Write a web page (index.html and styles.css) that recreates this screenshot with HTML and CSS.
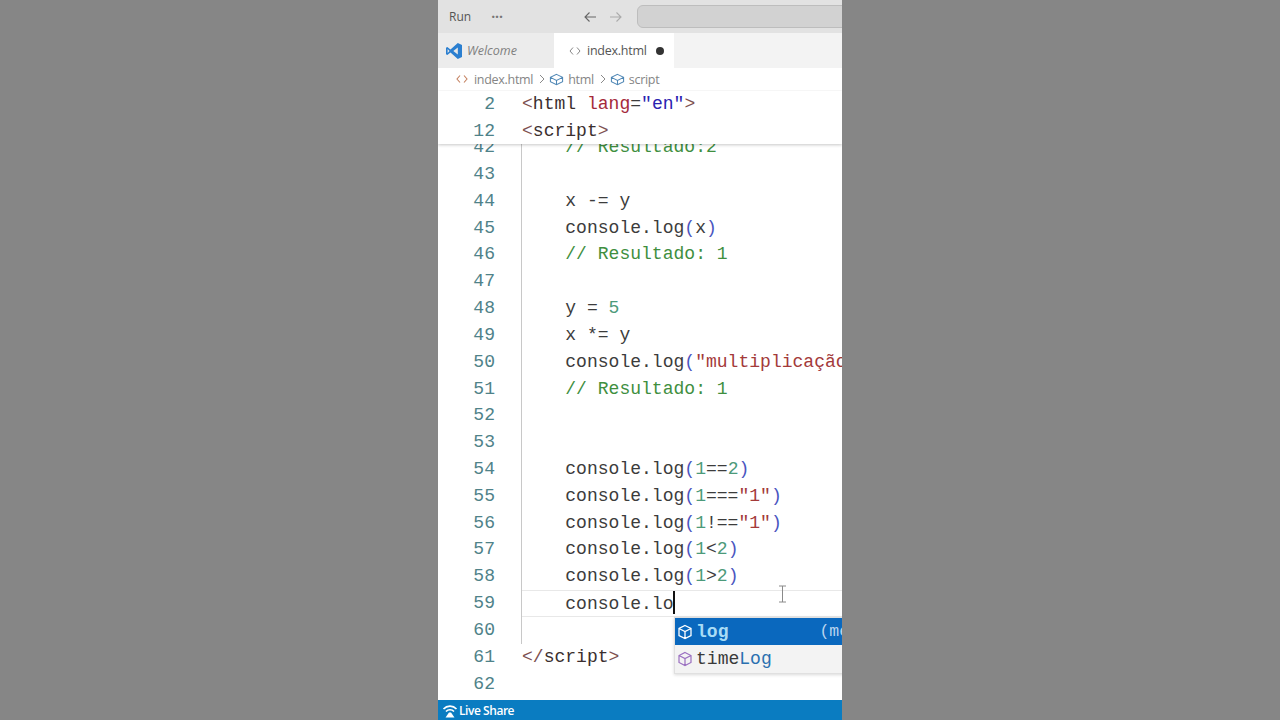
FILE: index.html
```html
<!DOCTYPE html>
<html lang="pt">
<head>
<meta charset="utf-8">
<title>index.html</title>
<link rel="stylesheet" href="styles.css">
</head>
<body>
<main class="phone">
  <header class="titlebar">
    <span class="menu">Run</span>
    <span class="dots">···</span>
    <svg class="nav nav-back" width="16" height="16" viewBox="0 0 16 16"><path d="M14 8H3M7.500 3.500L3 8l4.500 4.500" fill="none" stroke="#666" stroke-width="1.100"/></svg>
    <svg class="nav nav-fwd" width="16" height="16" viewBox="0 0 16 16"><path d="M2 8h11M8.500 3.500L13 8l-4.500 4.500" fill="none" stroke="#aaa" stroke-width="1.100"/></svg>
    <div class="search"></div>
  </header>
  <nav class="tabs">
    <div class="tab tab-welcome">
      <svg class="vscode" width="18" height="18" viewBox="0 0 18 18"><path d="M12.800 1L17 3v12l-4.200 2L5.500 10.400 2.300 13 1 12.300V5.700L2.300 5l3.200 2.600z" fill="#2b7fd0"/><path d="M12.800 5.500L8.300 9l4.500 3.500z" fill="#e8e8e8"/><path d="M2.600 6.900L4.500 9l-1.900 2.100z" fill="#e8e8e8"/></svg>
      <span class="tab-label-italic">Welcome</span>
    </div>
    <div class="tab tab-active">
      <svg class="code-svg" width="12" height="10" viewBox="0 0 12 10"><path d="M4 1.500L1 5l3 3.500M8 1.500L11 5 8 8.500" fill="none" stroke="#888" stroke-width="1"/></svg>
      <span class="tab-label">index.html</span>
      <span class="dirty"></span>
    </div>
  </nav>
  <div class="crumbs">
    <svg class="code-svg crumb-first" width="12" height="10" viewBox="0 0 12 10"><path d="M4 1.500L1 5l3 3.500M8 1.500L11 5 8 8.500" fill="none" stroke="#c4805f" stroke-width="1.100"/></svg><span>index.html</span><svg class="sep" width="8" height="12" viewBox="0 0 8 12"><path d="M2 2l4 4-4 4" fill="none" stroke="#8a8a8a" stroke-width="1"/></svg>
    <svg class="cube" width="15" height="15" viewBox="0 0 16 16"><path d="M8 2.500l6.500 3.200v4.600L8 13.500l-6.500-3.200V5.700zM1.500 5.700L8 9l6.500-3.300M8 9v4.500" fill="none" stroke="#4f87b5" stroke-width="1.100"/></svg><span>html</span><svg class="sep" width="8" height="12" viewBox="0 0 8 12"><path d="M2 2l4 4-4 4" fill="none" stroke="#8a8a8a" stroke-width="1"/></svg>
    <svg class="cube" width="15" height="15" viewBox="0 0 16 16"><path d="M8 2.500l6.500 3.200v4.600L8 13.500l-6.500-3.200V5.700zM1.500 5.700L8 9l6.500-3.300M8 9v4.500" fill="none" stroke="#4f87b5" stroke-width="1.100"/></svg><span>script</span>
  </div>
  <section class="editor">
    <div class="sticky">
      <div class="line"><span class="num">2</span><span class="code"><i class="tag">&lt;</i><i class="ink">html</i> <i class="attr">lang</i>=<i class="kw">"en"</i><i class="tag">&gt;</i></span></div>
      <div class="line"><span class="num">12</span><span class="code"><i class="tag">&lt;</i><i class="ink">script</i><i class="tag">&gt;</i></span></div>
    </div>
    <div class="scroll">
      <div class="line"><span class="num">42</span><span class="code">    <i class="cm">// Resultado:2</i></span></div>
      <div class="line"><span class="num">43</span><span class="code"></span></div>
      <div class="line"><span class="num">44</span><span class="code">    x -= y</span></div>
      <div class="line"><span class="num">45</span><span class="code">    console.log<i class="par">(</i>x<i class="par">)</i></span></div>
      <div class="line"><span class="num">46</span><span class="code">    <i class="cm">// Resultado: 1</i></span></div>
      <div class="line"><span class="num">47</span><span class="code"></span></div>
      <div class="line"><span class="num">48</span><span class="code">    y = <i class="n">5</i></span></div>
      <div class="line"><span class="num">49</span><span class="code">    x *= y</span></div>
      <div class="line"><span class="num">50</span><span class="code">    console.log<i class="par">(</i><i class="str">"multiplicação"</i><i class="par">)</i></span></div>
      <div class="line"><span class="num">51</span><span class="code">    <i class="cm">// Resultado: 1</i></span></div>
      <div class="line"><span class="num">52</span><span class="code"></span></div>
      <div class="line"><span class="num">53</span><span class="code"></span></div>
      <div class="line"><span class="num">54</span><span class="code">    console.log<i class="par">(</i><i class="n">1</i>==<i class="n">2</i><i class="par">)</i></span></div>
      <div class="line"><span class="num">55</span><span class="code">    console.log<i class="par">(</i><i class="n">1</i>===<i class="str">"1"</i><i class="par">)</i></span></div>
      <div class="line"><span class="num">56</span><span class="code">    console.log<i class="par">(</i><i class="n">1</i>!==<i class="str">"1"</i><i class="par">)</i></span></div>
      <div class="line"><span class="num">57</span><span class="code">    console.log<i class="par">(</i><i class="n">1</i>&lt;<i class="n">2</i><i class="par">)</i></span></div>
      <div class="line"><span class="num">58</span><span class="code">    console.log<i class="par">(</i><i class="n">1</i>&gt;<i class="n">2</i><i class="par">)</i></span></div>
      <div class="line line-current"><span class="num">59</span><span class="code">    console.lo<b class="caret"></b></span></div>
      <div class="line"><span class="num">60</span><span class="code"></span></div>
      <div class="line no-guide"><span class="num">61</span><span class="code"><i class="tag">&lt;/</i><i class="ink">script</i><i class="tag">&gt;</i></span></div>
      <div class="line no-guide"><span class="num">62</span><span class="code"></span></div>
      <div class="suggest">
        <div class="sug sug-on">
          <svg width="16" height="16" viewBox="0 0 16 16"><path d="M8 1.500l6 3v7l-6 3-6-3v-7zM2 4.500l6 3 6-3M8 7.500v7" fill="none" stroke="#fff" stroke-width="1.300"/></svg>
          <span class="sug-text"><b class="match">log</b></span>
          <span class="sug-meta">(me</span>
        </div>
        <div class="sug">
          <svg width="16" height="16" viewBox="0 0 16 16"><path d="M8 1.500l6 3v7l-6 3-6-3v-7zM2 4.500l6 3 6-3M8 7.500v7" fill="none" stroke="#9a6fc0" stroke-width="1.200"/></svg>
          <span class="sug-text">time<span class="match2">Log</span></span>
        </div>
      </div>
      <svg class="ibeam" width="9" height="18" viewBox="0 0 9 18"><path d="M1 1h7M4.500 1v16M1 17h7" fill="none" stroke="#8a8a8a" stroke-width="1"/></svg>
    </div>
  </section>
  <footer class="status">
    <svg width="16" height="16" viewBox="0 0 16 16"><path d="M1.500 7a9 9 0 0 1 13 0M4 9.500a5.500 5.500 0 0 1 8 0" fill="none" stroke="#fff" stroke-width="1.700"/><path d="M3.500 15.500l3.500-5h2l3.500 5z" fill="#fff"/></svg>
    <span>Live Share</span>
  </footer>
</main>
</body>
</html>
```
FILE: styles.css
```css
* { box-sizing: border-box; }
html, body { margin: 0; height: 100%; }
body {
  background: #868686;
  display: flex;
  justify-content: center;
  overflow: hidden;
  font-family: "Open Sans", "Noto Sans", sans-serif;
}
i { font-style: normal; }
.phone {
  width: 404px;
  height: 720px;
  background: #fff;
  display: flex;
  flex-direction: column;
  overflow: hidden;
}
.titlebar {
  height: 33px;
  flex: none;
  background: #e2e2e2;
  display: flex;
  align-items: center;
  padding-left: 11px;
  font-size: 12px;
  color: #555;
}
.dots { margin-left: 20px; font-size: 14px; font-weight: 700; color: #777; }
.nav-back { margin-left: 79px; }
.nav-fwd { margin-left: 10px; }
.search {
  margin-left: 13px;
  flex: 1;
  height: 23px;
  margin-right: -8px;
  background: #d2d2d2;
  border: 1px solid #bdbdbd;
  border-radius: 6px;
}
.tabs {
  height: 35px;
  flex: none;
  display: flex;
  background: #f3f3f3;
  font-size: 12.500px;
}
.tab { display: flex; align-items: center; }
.tab-welcome { width: 116px; padding-left: 7px; gap: 4px; background: #ececec; color: #808080; }
.tab-label-italic { font-style: italic; }
.tab-active { width: 120px; background: #fff; padding-left: 15px; color: #555; }
.tab-label { margin-left: 6px; letter-spacing: -.25px; }
.dirty { width: 8px; height: 8px; border-radius: 50%; background: #333; margin-left: 9px; }
.crumbs {
  height: 22px;
  flex: none;
  display: flex;
  align-items: center;
  padding-left: 18px;
  font-size: 12.500px;
  letter-spacing: -.3px;
  color: #858585;
}
.crumb-first { margin-right: 6px; }
.sep { margin: 0 3px 0 5px; }
.cube { margin-right: 4px; }
.editor {
  height: 610px;
  flex: none;
  position: relative;
  overflow: hidden;
  padding-top: .7px;
  font-family: "Liberation Mono", monospace;
  font-size: 18.050px;
  color: #3c3c3c;
}
.sticky {
  position: relative;
  z-index: 2;
  background: #fff;
  margin-bottom: -10.300px;
  box-shadow: 0 1px 3px rgba(0, 0, 0, .22);
}
.scroll { position: relative; }
.line {
  height: 26.830px;
  display: flex;
  line-height: 26.830px;
}
.num { width: 57px; margin-right: 27px; text-align: right; color: #4f8289; flex: none; }
.code { flex: 1; height: 100%; white-space: pre; }
.scroll .line:not(.no-guide) .code { box-shadow: -1px 0 0 #c8c8c8; }
.line-current .code { position: relative; line-height: 23.830px; border-top: 1.500px solid #e8e8e8; border-bottom: 1.500px solid #e8e8e8; }
.caret { display: inline-block; width: 2px; height: 23px; background: #111; vertical-align: -5px; margin-left: -1px; }
.tag { color: #7d5050; }
.ink { color: #3b2f2f; }
.attr { color: #a52a3a; }
.kw { color: #2a22b0; }
.cm { color: #3f8f3f; }
.par { color: #4a55c0; }
.n { color: #4c9a7a; }
.str { color: #a33a3a; }
.suggest {
  position: absolute;
  left: 236px;
  top: 483px;
  width: 180px;
  height: 57px;
  background: #f3f3f3;
  border: 1px solid #e0e0e0;
  box-shadow: 0 1px 3px rgba(0, 0, 0, .15);
}
.sug { height: 27px; display: flex; align-items: center; padding-left: 2px; gap: 3px; }
.sug-on { background: #0a68be; color: #fff; }
.sug-text { color: #3a3a3a; }
.sug-on .match { color: #a8dcf5; font-weight: 700; }
.match2 { color: #2a70b0; }
.sug-meta { margin-left: 88px; color: #b8d4ee; font-size: 16.500px; }
.ibeam { position: absolute; left: 340px; top: 451px; }
.status {
  height: 20px;
  flex: none;
  margin-top: auto;
  background: #0a7cc1;
  color: #fff;
  display: flex;
  align-items: center;
  gap: 1px;
  padding-left: 4px;
  font-size: 12px;
  font-weight: 600;
  letter-spacing: -.45px;
}
```
